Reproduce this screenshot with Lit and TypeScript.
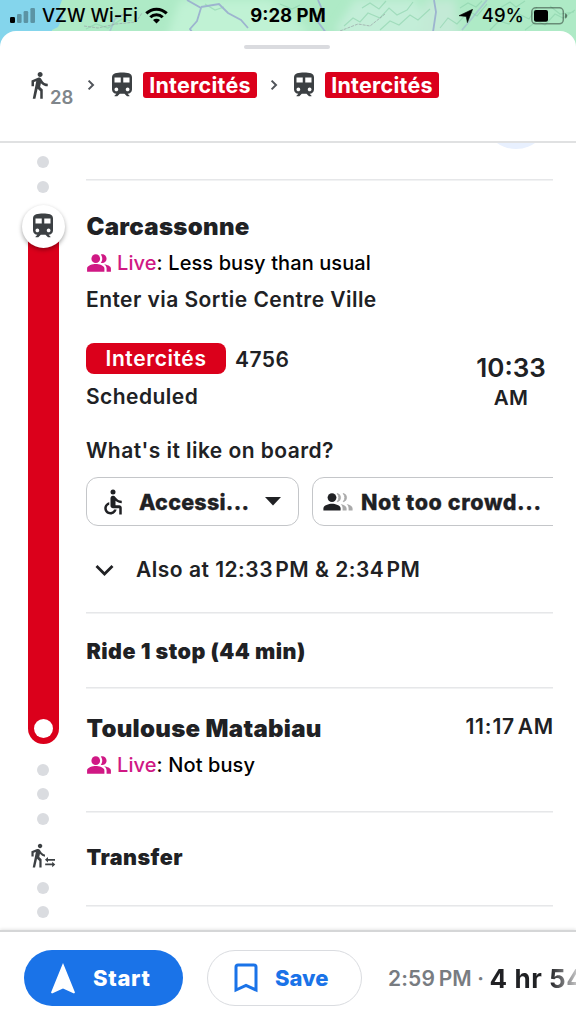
import { LitElement, html, svg, css } from "lit";
import { customElement, property } from "lit/decorators.js";

const ICONS: Record<string, unknown> = {
  train: svg`<path d="M12 2c-4 0-8 .5-8 4v9.5C4 17.43 5.57 19 7.5 19L6 20.5v.5h2.23l2-2H14l2 2h2v-.5L16.5 19c1.93 0 3.5-1.57 3.5-3.5V6c0-3.5-3.58-4-8-4zM7.5 17c-.83 0-1.5-.67-1.5-1.5S6.67 14 7.5 14s1.5.67 1.5 1.5S8.33 17 7.5 17zm3.5-7H6V6h5v4zm2 0V6h5v4h-5zm3.5 7c-.83 0-1.5-.67-1.5-1.5s.67-1.5 1.5-1.5 1.5.67 1.5 1.5-.67 1.5-1.5 1.5z"/>`,
  walk: svg`<path d="M12.9 5.5c1.1 0 2-.9 2-2s-.9-2-2-2-2 .9-2 2 .9 2 2 2zM9.8 8.9L7 23h2.1l1.8-8 2.1 2v6h2v-7.5l-2.1-2 .6-3C14.8 12 16.8 13 19 13v-2c-1.900 0-3.500-1-4.300-2.400l-1-1.600c-.4-.6-1-1-1.700-1-.3 0-.5.1-.8.1L6 8.300V13h2V9.600l1.800-.7"/>`,
  transfer: svg`<path d="M11.2 5.3c1.05 0 1.9-.85 1.9-1.9s-.85-1.9-1.9-1.9-1.9.85-1.9 1.9.85 1.9 1.9 1.9zM7.6 8.6L4.9 21.9h2l1.7-7.6 2 1.9v5.7h1.9v-7.1l-2-1.9.6-2.8c1.200 1.400 2.600 2.300 4.300 2.500v-1.900c-1.400-.2-2.600-1-3.400-2.300l-.9-1.500c-.4-.6-1-.9-1.600-.9-.3 0-.5.1-.8.1L3.800 8v4.500h1.900V9.300l1.900-.7"/><path d="M24 14.600h-6v-1.700L15.400 15.300 18 17.600V16h6zM15.600 18.500h6v-1.600l2.600 2.300-2.600 2.400v-1.700h-6z"/>`,
  people: svg`<circle cx="9" cy="8" r="4"/><path d="M16.67 13.13C18.04 14.06 19 15.32 19 17v3h4v-3c0-2.18-3.57-3.47-6.33-3.87zM15 12c2.21 0 4-1.79 4-4s-1.79-4-4-4c-.47 0-.91.1-1.33.24C14.5 5.27 15 6.58 15 8s-.5 2.73-1.33 3.76c.42.14.86.24 1.33.24zM9 13c-2.67 0-8 1.34-8 4v3h16v-3c0-2.66-5.33-4-8-4z"/>`,
  wheelchair: svg`<circle cx="12" cy="4" r="2"/><path d="M19 13v-2c-1.54.02-3.09-.75-4.07-1.83l-1.29-1.43c-.17-.19-.38-.34-.61-.45-.01 0-.01-.01-.02-.01H13c-.35-.2-.75-.3-1.19-.26C10.76 7.11 10 8.04 10 9.09V15c0 1.1.9 2 2 2h5v5h2v-5.5c0-1.1-.9-2-2-2h-3v-3.45c1.29 1.07 3.25 1.94 5 1.95zm-6.17 5c-.41 1.16-1.52 2-2.83 2-1.66 0-3-1.34-3-3 0-1.31.84-2.41 2-2.83V12.1c-2.28.46-4 2.48-4 4.9 0 2.76 2.24 5 5 5 2.42 0 4.44-1.72 4.9-4h-2.07z"/>`,
};

@customElement("ui-icon")
class UiIcon extends LitElement {
  @property() name = "";
  static styles = css`
    :host { display: block; flex: none; }
    svg { display: block; width: 100%; height: 100%; fill: currentColor; overflow: visible; }
  `;
  render() {
    return html`<svg viewBox="0 0 24 24">${ICONS[this.name]}</svg>`;
  }
}

@customElement("status-bar")
class StatusBar extends LitElement {
  static styles = css`
    :host { display: block; position: relative; height: 31px; color: #000; }
    .map { position: absolute; left: 0; top: 0; width: 576px; height: 56px; }
    .row { position: relative; height: 31px; display: grid; grid-template-columns: 1fr auto 1fr; align-items: center; }
    .left, .right { display: flex; align-items: center; }
    .left { padding-left: 10px; }
    .right { justify-content: flex-end; padding-right: 5px; }
    .t { font-size: 18.5px; line-height: 31px; font-weight: 500; white-space: pre; }
    .carrier { margin-left: 7px; }
    .clock { font-weight: 700; }
    .wifi { margin-left: 7px; }
    .loc { margin-right: 9px; }
    .batt { margin-left: 7px; }
    svg { display: block; }
  `;
  render() {
    return html`
      <svg class="map" viewBox="0 0 576 56">
        <defs>
          <filter id="soft"><feGaussianBlur stdDeviation="4" /></filter>
        </defs>
        <rect width="576" height="56" fill="#aeeac6" />
        <g filter="url(#soft)">
          <path d="M180 0h90l40 31-60 25h-90z" fill="#c0f2d4" />
          <path d="M355 0h60l20 30-60 20-40-20z" fill="#c3eed8" />
          <path d="M425 0h30l5 40h-40z" fill="#c3ead6" />
        </g>
        <path d="M0 0h62l-3 8 4 9-5 10-6 3v26H0z" fill="#84d5ec" />
        <g fill="none" stroke="#8bd2ab" stroke-width="1.2" opacity=".6">
          <path d="M344 26l9-8 7 4 8-9 12 5 9-10 8 7 10-5 6-8M380 30l10-9 9 4 11-10 8 5 12-11M440 28l8-10 9 6 12-13 8 5 10-12M490 30l9-9 10 3 8-11 12 6 8-12M525 30l12-9 8 4 10-11 8 4 12-8M550 6l10 8 14-2"/>
          <path d="M86 29l10-5 12 4 14-9 10 2M205 4l10 6 9-3M280 4l12 5 8-4M362 8l8-5 9 6 7-8M460 8l8-5 8 4 6-6M500 8l10-6 6 5 9-6"/>
        </g>
        <g fill="none" stroke="#9db4cf" stroke-width="1.8">
          <path d="M187 0l14 8-4 13-7 8 4 6M201 7l18-3 9 9 13 7 7 8"/>
          <path d="M434 0l2 12-3 20M318 0l6 14-6 8 9 12"/>
          <path d="M110 31l5-12 9-5M462 30l11-13 14-17" opacity=".6"/>
        </g>
        <g fill="none" stroke="#9dabab" stroke-width="1" stroke-dasharray="3 1" opacity=".8">
          <path d="M84 26l14 2 18-4 20-2 6-9M340 31l18-7 12 2 15-12"/>
        </g>
      </svg>
      <div class="row">
        <div class="left">
          <svg width="25" height="16" viewBox="0 0 25 16">
            <rect x="0" y="9" width="5" height="6" rx="1.2" />
            <g opacity=".3"><rect x="7" y="6" width="4.6" height="9" rx="1.2" /><rect x="13.6" y="3" width="4.6" height="12" rx="1.2" /><rect x="20.4" y="0" width="4.6" height="15" rx="1.2" /></g>
          </svg>
          <span class="t carrier">VZW Wi-Fi</span>
          <svg class="wifi" width="23" height="17" viewBox="0 0 23 17">
            <g fill="none" stroke="#000" stroke-width="3"><path d="M1.3 6.4a14.4 14.4 0 0 1 20.4 0" /><path d="M5.3 10.3a8.8 8.8 0 0 1 12.4 0" /></g>
            <path d="M8 13.1a5 5 0 0 1 7 0L11.5 16.6z" />
          </svg>
        </div>
        <span class="t clock">9:28 PM</span>
        <div class="right">
          <svg class="loc" width="14" height="14" viewBox="0 0 14 14"><path d="M13.6.3 8.4 13.6 7.2 7.4 0 6.7z" stroke="#000" stroke-width=".6" stroke-linejoin="round" /></svg>
          <span class="t">49%</span>
          <svg class="batt" width="40" height="18" viewBox="0 0 40 18">
            <rect x=".8" y=".8" width="31.5" height="16" rx="4" fill="none" stroke="#000" stroke-opacity=".4" stroke-width="1.5" />
            <rect x="3" y="3" width="14" height="11.7" rx="2" />
            <path d="M34 6.2c3 .8 3 4.6 0 5.4z" opacity=".45" />
          </svg>
        </div>
      </div>
    `;
  }
}

@customElement("app-root")
class AppRoot extends LitElement {
  static styles = css`
    :host { display: flex; flex-direction: column; width: 576px; height: 1024px; overflow: hidden; background: #fff; color: #202124; font-family: Inter, "Liberation Sans", sans-serif; }
    * { box-sizing: border-box; }
    .sheet { position: relative; flex: 1; min-height: 0; display: flex; flex-direction: column; background: #fff; border-radius: 16px 16px 0 0; }
    header { height: 112px; flex: none; border-bottom: 2px solid #e0e1e2; display: flex; flex-direction: column; align-items: center; padding: 14px 2px 0 0; }
    .grab { width: 86px; height: 4px; border-radius: 2px; background: #dadbdf; }
    .trip { align-self: stretch; display: flex; align-items: center; height: 30px; margin-top: 21px; padding-left: 24px; color: #3c4043; }
    .i30 { width: 30px; height: 30px; }
    .mins { font-size: 18.5px; line-height: 24px; font-weight: 600; color: #80868b; margin: 23px 0 0 -4px; width: 27px; }
    .gt { width: 8px; height: 12px; fill: none; stroke: #50545a; stroke-width: 2; margin: 0 12px 0 10px; }
    .line { height: 26px; line-height: 27px; width: 114px; margin-left: 6px; text-align: center; border-radius: 3px; background: #db001b; color: #fff; font-size: 21.5px; font-weight: 700; letter-spacing: .25px; }
    .line + .gt { margin-left: 13px; margin-right: 11px; }

    .body { flex: 1; min-height: 0; overflow: hidden; display: grid; grid-template-columns: 86px 467px; }
    .rail { display: flex; flex-direction: column; align-items: center; padding-top: 13px; color: #3c4043; }
    .dots { display: flex; flex-direction: column; gap: 12.5px; }
    .dot { width: 12px; height: 12px; border-radius: 50%; background: #dadce0; }
    .badge { z-index: 1; width: 43px; height: 43px; border-radius: 50%; background: #fff; box-shadow: 0 2px 4px rgba(0,0,0,.35); display: grid; place-items: center; margin-top: 12px; }
    .badge ui-icon { width: 30px; height: 30px; }
    .bar { width: 31px; height: 510px; margin-top: -14px; background: #db001b; border-radius: 0 0 16px 16px; display: flex; flex-direction: column; justify-content: flex-end; align-items: center; padding-bottom: 6px; }
    .bar i { width: 19px; height: 19px; border-radius: 50%; background: #fff; }
    .d2 { margin-top: 20px; }
    .tr { width: 28px; height: 28px; margin: 17px 0 12px; align-self: flex-start; margin-left: 27px; }

    .peek { height: 36px; display: flex; justify-content: flex-end; padding-right: 4px; }
    .peek i { width: 66px; height: 66px; margin-top: -60px; border-radius: 50%; background: #e8f0fe; }
    .list { display: flex; flex-direction: column; }
    .rule { height: 1px; background: #e6e7e9; box-shadow: 0 1px #f1f2f3; flex: none; }
    .txt { white-space: pre; font-size: 21px; font-weight: 600; line-height: 36px; height: 36px; letter-spacing: .45px; }
    .stop { font-size: 24px; line-height: 37px; font-weight: 900; letter-spacing: .3px; padding-left: .5px; }
    .live { display: flex; align-items: center; font-size: 20px; font-weight: 500; letter-spacing: .1px; color: #000; }
    .live ui-icon { width: 26px; height: 26px; color: #d01884; margin-right: 5px; }
    .live b { font-weight: 500; color: #d01884; }
    .board { padding-top: 28px; }
    .board .live { margin: 1px 0; }
    .dep { display: flex; justify-content: space-between; margin-top: 25px; height: 90px; }
    .svc { display: flex; align-items: center; height: 31px; gap: 9px; margin-bottom: 5px; }
    .num { line-height: 37px; }
    .pill { width: 140px; height: 31px; line-height: 31px; border-radius: 8px; background: #db001b; color: #fff; text-align: center; font-size: 21px; font-weight: 600; letter-spacing: .6px; }
    .when { width: 84px; text-align: center; padding-top: 7px; }
    .when .h { font-size: 26px; line-height: 36px; height: 36px; font-weight: 600; }
    .when .a { font-size: 20.5px; line-height: 23px; font-weight: 600; letter-spacing: .4px; }
    .chips { display: flex; gap: 13px; overflow: hidden; margin-top: 8px; }
    .chip { flex: none; height: 49px; border: 1.5px solid #c4c6c9; border-radius: 12px; display: flex; align-items: center; font-size: 21.5px; font-weight: 800; white-space: pre; -webkit-text-stroke: .3px #202124; }
    .c1 { width: 213px; padding-left: 11px; letter-spacing: .25px; }
    .c1 ui-icon { width: 30px; height: 30px; margin-right: 11px; -webkit-text-stroke: 0; }
    .c1 .car { margin-left: 16px; }
    .c2 { width: 300px; padding-left: 10px; letter-spacing: .6px; }
    .c2 svg { margin-right: 8px; }
    .also { display: flex; align-items: center; margin-top: 26px; }
    .also svg { margin: 0 22px 0 9px; }
    .also span { letter-spacing: .5px; }
    .ride { font-size: 21.5px; line-height: 37px; font-weight: 900; letter-spacing: .45px; padding-left: .5px; }
    .end { display: flex; justify-content: space-between; }
    .arr { margin-top: -1px; margin-right: -1px; letter-spacing: .85px; }
    .r1 { margin-top: 24px; }
    .m1 { margin: 20px 0 18px; }
    .m2 { margin-top: 22px; }
    .end + .live { margin-top: 1px; }
    .r3 { margin-top: 28px; }
    .m3 { margin: 27px 0 30px; }

    footer { height: 94px; flex: none; border-top: 2px solid #d5d6d7; box-shadow: 0 -1px 3px rgba(0,0,0,.1); display: flex; align-items: center; padding: 0 0 0 24px; position: relative; background: #fff; overflow: hidden; white-space: pre; }
    .btn { height: 56px; border-radius: 28px; display: flex; align-items: center; font-size: 22px; font-weight: 800; flex: none; }
    .start { width: 159px; background: #1a73e8; color: #fff; padding-left: 27px; letter-spacing: .7px; }
    .start svg { margin-right: 18px; }
    .save { width: 155px; margin-left: 24px; border: 1.5px solid #dadce0; color: #1a73e8; padding-left: 26px; }
    .save svg { margin-right: 17px; }
    .eta { margin-left: 26px; color: #787c81; font-size: 21px; font-weight: 600; letter-spacing: .15px; }
    .dur { font-size: 26px; font-weight: 650; letter-spacing: .55px; background: linear-gradient(90deg, #202124 60px, rgba(32,33,36,0) 96px); -webkit-background-clip: text; background-clip: text; color: transparent; }
  `;

  private gt() {
    return html`<svg class="gt" viewBox="0 0 8 12"><path d="M1.6 1.6 6 6 1.6 10.4" /></svg>`;
  }
  private dots(n: number) {
    return Array.from({ length: n }, () => html`<i class="dot"></i>`);
  }
  private live(text: string) {
    return html`<div class="txt live"><ui-icon name="people"></ui-icon><b>Live</b>: ${text}</div>`;
  }

  render() {
    return html`
      <status-bar></status-bar>
      <div class="sheet">
        <header>
          <div class="grab"></div>
          <div class="trip">
            <ui-icon class="i30" name="walk"></ui-icon><span class="mins">28</span>${this.gt()}
            <ui-icon class="i30" name="train"></ui-icon><span class="line">Intercités</span>${this.gt()}
            <ui-icon class="i30" name="train"></ui-icon><span class="line">Intercités</span>
          </div>
        </header>
        <div class="body">
          <div class="rail">
            <div class="dots">${this.dots(2)}</div>
            <div class="badge"><ui-icon name="train"></ui-icon></div>
            <div class="bar"><i></i></div>
            <div class="dots d2">${this.dots(3)}</div>
            <ui-icon class="tr" name="transfer"></ui-icon>
            <div class="dots">${this.dots(3)}</div>
          </div>
          <div class="list">
            <div class="peek"><i></i></div>
            <div class="rule"></div>
            <div class="board">
              <div class="txt stop">Carcassonne</div>
              ${this.live("Less busy than usual")}
              <div class="txt enter">Enter via Sortie Centre Ville</div>
              <div class="dep">
                <div>
                  <div class="svc"><span class="pill">Intercités</span><span class="txt num">4756</span></div>
                  <div class="txt sched">Scheduled</div>
                </div>
                <div class="when"><div class="h">10:33</div><div class="a">AM</div></div>
              </div>
              <div class="txt what">What's it like on board?</div>
              <div class="chips">
                <div class="chip c1"><ui-icon name="wheelchair"></ui-icon><span>Accessi...</span>
                  <svg class="car" width="16" height="9" viewBox="0 0 16 9"><path d="M0 0h16L8 8.6z" fill="#202124" /></svg></div>
                <div class="chip c2">
                  <svg width="30" height="18" viewBox="0 0 30 18" fill="#202124"><circle cx="9" cy="4.6" r="4.4" /><path d="M.4 17.6v-2.2c0-3 5.4-4.6 8.6-4.6s8.6 1.6 8.6 4.6v2.2z" /><g fill="#aaa"><path d="M14.2.4a4.3 4.3 0 0 1 0 8.4 7 7 0 0 0 0-8.4zM20.2.4a4.3 4.3 0 0 1 0 8.4 7 7 0 0 0 0-8.4z" stroke="#aaa" stroke-width=".8" /><path d="M17.600 11c3.600.8 6 2.200 6 4.600v2h-4v-2.200c0-1.800-.6-3-2-4.400zM23.600 11c3.600.8 6 2.200 6 4.600v2h-4v-2.200c0-1.800-.6-3-2-4.400z" /></g></svg><span>Not too crowd...</span>
                </div>
              </div>
              <div class="txt also"><svg width="19" height="13" viewBox="0 0 19 13" fill="none" stroke="#202124" stroke-width="2.8"><path d="M1.500 2 9.500 10 17.500 2" /></svg><span>Also at 12:33&#8202;PM & 2:34&#8202;PM</span></div>
            </div>
            <div class="rule r1"></div>
            <div class="txt ride m1">Ride 1 stop (44 min)</div>
            <div class="rule"></div>
            <div class="end m2"><div class="txt stop">Toulouse Matabiau</div><div class="txt arr">11:17&#8202;AM</div></div>
            ${this.live("Not busy")}
            <div class="rule r3"></div>
            <div class="txt ride m3">Transfer</div>
            <div class="rule"></div>
          </div>
        </div>
        <footer>
          <div class="btn start"><svg width="24" height="31" viewBox="0 0 24 31" fill="#fff"><path d="M12 0 24 29.500 23 30.500 12 25.500 1 30.500 0 29.500z" /></svg><span>Start</span></div>
          <div class="btn save"><svg width="24" height="30" viewBox="0 0 24 30" fill="none" stroke="#1a73e8" stroke-width="3"><path d="M2 27V4a2 2 0 0 1 2-2h16a2 2 0 0 1 2 2v23l-10-4.600z" /></svg><span>Save</span></div>
          <span class="eta">2:59&#8201;PM · </span><span class="dur">4 hr 54</span>
        </footer>
      </div>
    `;
  }
}
